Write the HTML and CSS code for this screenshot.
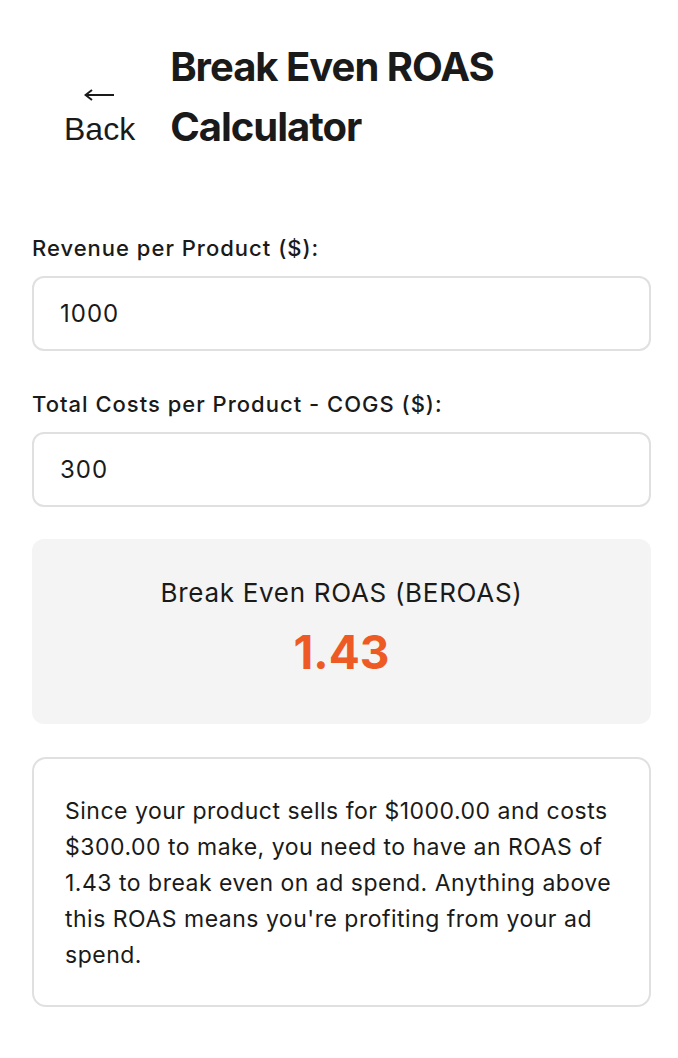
FILE: index.html
```html
<!DOCTYPE html>
<html lang="en">
<head>
  <meta charset="UTF-8" />
  <meta name="viewport" content="width=device-width, initial-scale=1" />
  <title>Break Even ROAS Calculator</title>
  <link rel="stylesheet" href="styles.css">
</head>
<body>
  <div class="page">
    <header class="top-bar">
      <button class="back-btn" type="button">
        <span class="back-arrow">
          <svg width="31" height="12" viewBox="0 0 31 12" aria-hidden="true">
            <path d="M2 6 H30" stroke="#1a1a1a" stroke-width="2" fill="none"/>
            <path d="M8 1 L1.5 6 L8 11" stroke="#1a1a1a" stroke-width="2" fill="none" stroke-linejoin="miter"/>
          </svg>
        </span>
        <span>Back</span>
      </button>
      <h1>Break Even ROAS Calculator</h1>
    </header>

    <div class="field">
      <label for="revenue">Revenue per Product ($):</label>
      <input id="revenue" type="number" value="1000">
    </div>
    <div class="field">
      <label for="cogs">Total Costs per Product - COGS ($):</label>
      <input id="cogs" type="number" value="300">
    </div>

    <div class="result-box">
      <div class="result-label">Break Even ROAS (BEROAS)</div>
      <div class="result-value" id="beroas">1.43</div>
    </div>

    <div class="explain-box">
      <p id="explain">Since your product sells for $1000.00 and costs $300.00 to make, you need to have an ROAS of 1.43 to break even on ad spend. Anything above this ROAS means you're profiting from your ad spend.</p>
    </div>
  </div>
</body>
</html>
```

FILE: styles.css
```css
body {
  margin: 0;
  background-color: #fff;
  color: #1a1a1a;
  font-family: Inter, "Noto Sans", sans-serif;
}
.page {
  padding: 37px 27px 40px 32px;
}
.top-bar {
  display: flex;
  align-items: flex-end;
  gap: 35px;
  padding-left: 32px;
  margin-bottom: 78px;
}
.back-btn {
  display: flex;
  flex-direction: column;
  align-items: center;
  margin-bottom: 10px;
  background: none;
  border: none;
  padding: 0;
  font-family: "Liberation Sans", Arial, sans-serif;
  font-size: 32px;
  line-height: 36px;
  color: #1a1a1a;
}
.back-arrow {
  display: flex;
  align-items: center;
  justify-content: center;
  height: 32px;
}
.back-arrow svg {
  display: block;
}
.top-bar h1 {
  margin: 0;
  font-size: 40px;
  line-height: 60px;
  font-weight: 700;
  letter-spacing: -1px;
}
.field {
  margin-bottom: 40px;
}
.field label {
  display: block;
  font-size: 22px;
  font-weight: 500;
  letter-spacing: 1px;
  margin-bottom: 15px;
}
.field input {
  display: block;
  box-sizing: border-box;
  width: 100%;
  height: 75px;
  padding: 0 26px;
  border: 2px solid #e0e0e0;
  border-radius: 12px;
  font-family: Inter, "Noto Sans", sans-serif;
  font-size: 24px;
  letter-spacing: 1px;
  color: #1a1a1a;
  background: #fff;
}
.result-box {
  margin-top: -8px;
  background-color: #f4f4f4;
  border-radius: 12px;
  padding: 38px 20px 44px;
  text-align: center;
}
.result-label {
  font-size: 26px;
  line-height: 32px;
  letter-spacing: 0.7px;
}
.result-value {
  margin-top: 15px;
  font-size: 46px;
  line-height: 56px;
  font-weight: 700;
  color: #ee5a24;
}
.explain-box {
  margin-top: 33px;
  border: 2px solid #e0e0e0;
  border-radius: 14px;
  padding: 34px 31px 32px;
}
.explain-box p {
  margin: 0;
  font-size: 23px;
  line-height: 36px;
  letter-spacing: 0.5px;
}
```
